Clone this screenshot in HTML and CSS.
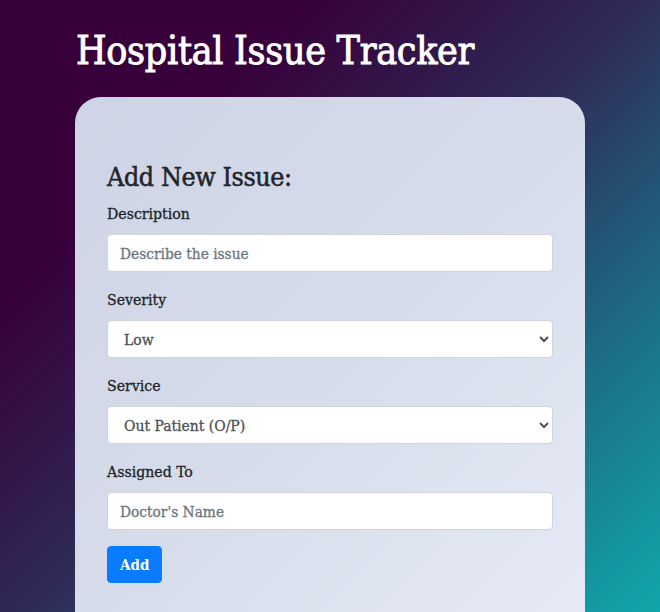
FILE: index.html
```html
<!DOCTYPE html>
<html lang="en">
<head>
<meta charset="utf-8">
<title>Hospital Issue Tracker</title>
<link rel="stylesheet" href="styles.css">
</head>
<body>
<main class="container">
  <h1 class="title">Hospital Issue Tracker</h1>
  <section class="card">
    <form class="issue-form">
      <h3 class="form-heading">Add New Issue:</h3>
      <div class="field">
        <label class="label" for="desc">Description</label>
        <input class="control" id="desc" type="text" placeholder="Describe the issue">
      </div>
      <div class="field">
        <label class="label" for="sev">Severity</label>
        <select class="control select" id="sev">
          <option>Low</option>
          <option>Medium</option>
          <option>High</option>
        </select>
      </div>
      <div class="field">
        <label class="label" for="svc">Service</label>
        <select class="control select" id="svc">
          <option>Out Patient (O/P)</option>
          <option>In Patient (I/P)</option>
        </select>
      </div>
      <div class="field">
        <label class="label" for="assn">Assigned To</label>
        <input class="control" id="assn" type="text" placeholder="Doctor's Name">
      </div>
      <button class="btn" type="button">Add</button>
    </form>
  </section>
</main>
</body>
</html>
```
FILE: styles.css
```css
html, body {
  margin: 0;
  height: 100%;
}
body {
  font-family: "DejaVu Serif", serif;
  font-stretch: condensed;
  color: #212529;
  -webkit-text-stroke: 0.3px currentColor;
  background: linear-gradient(135deg, #38003a 0%, #38003a 24%, #2e2a56 50%, #1d6c86 75%, #10a8aa 100%);
  min-height: 612px;
  overflow: hidden;
}
.container {
  width: 510px;
  margin: 0 auto;
  padding-top: 27px;
}
.title {
  margin: 0 0 0 1px;
  font-size: 39px;
  line-height: 48px;
  font-weight: 400;
  color: #fff;
  letter-spacing: -0.3px;
  -webkit-text-stroke: 0.9px #fff;
}
.card {
  margin-top: 22px;
  border-radius: 26px;
  background: linear-gradient(135deg, #ced4e5 0%, #d6dcea 50%, #e6ebf6 100%);
  padding: 63px 32px 60px;
}
.form-heading {
  margin: 0 0 8px;
  font-size: 26.6px;
  line-height: 34px;
  font-weight: 400;
  letter-spacing: -0.4px;
  -webkit-text-stroke: 0.5px currentColor;
}
.field {
  display: flex;
  flex-direction: column;
  margin-bottom: 16px;
}
.label {
  font-size: 15.7px;
  line-height: 24px;
  margin-bottom: 8px;
  padding-top: 1px;
  margin-top: -1px;
}
.control {
  box-sizing: border-box;
  height: 38px;
  width: 100%;
  padding: 7px 12px 5px;
  font-family: inherit;
  font-stretch: condensed;
  font-size: 15.3px;
  color: #495057;
  background: #fff;
  border: 1px solid #ced4da;
  border-radius: 4px;
  outline: none;
  -webkit-text-stroke: 0.3px currentColor;
}
.control::placeholder {
  color: #6c757d;
}
.select {
  padding-left: 12px;
  font-size: 15.5px;
}
.btn {
  height: 37px;
  padding: 0 12px;
  font-family: inherit;
  font-stretch: condensed;
  font-size: 15px;
  font-weight: 700;
  color: #fff;
  background: #087bff;
  border: 1px solid #087bff;
  border-radius: 4px;
  -webkit-text-stroke: 0;
}
```
